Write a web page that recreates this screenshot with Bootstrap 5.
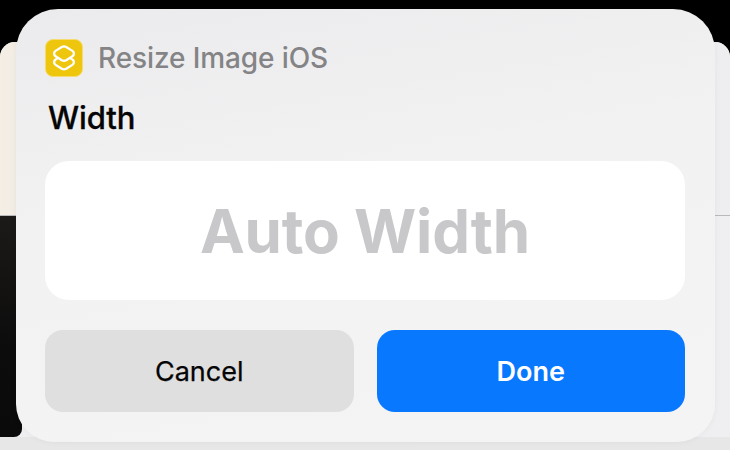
<!DOCTYPE html>
<html lang="en">
<head>
<meta charset="utf-8">
<title>Resize Image iOS</title>
<link href="https://cdn.jsdelivr.net/npm/bootstrap@5.3.0/dist/css/bootstrap.min.css" rel="stylesheet">
<style>
html,body{width:730px;height:450px;overflow:hidden;background:#000;font-family:"Inter","Liberation Sans",sans-serif}
.stage{width:730px;height:450px;padding-top:42px}
.sheet{height:408px;background:#e9e9eb;border-radius:15px 15px 0 0;overflow:hidden}
.sheet-top{height:174px;background:linear-gradient(90deg,#f4eee5 0,#f1ece5 20px,#eeeef0 700px);border-bottom:1px solid #b9b9bb}
.sheet-mid{height:221px;background:#efeff1}
.dark-strip{width:22px;height:221px;background:linear-gradient(180deg,#1c1a18,#0c0c0c 60%,#0a0a0a);border-radius:0 0 8px 0}
.sheet-foot{height:13px;background:#e7e7e8}
.dialog{position:absolute;left:16px;top:9px;width:699px;height:433px;border-radius:42px 42px 38px 38px;background:linear-gradient(170deg,#ebebed 0,#f2f2f3 40%,#f4f4f5 100%);padding:30px 30px 30px 29px;box-shadow:0 0 6px rgba(0,0,0,.05)}
.app-icon{width:38px;height:38px;border-radius:8px;background:#eec60e;border:1px solid #f6dc70}
.app-name{font-size:28px;font-weight:500;line-height:38px;color:#848486;letter-spacing:-.1px;margin-left:15px}
.field-label{font-size:31px;font-weight:500;line-height:36px;color:#050505;margin:23px 0 25px 3px;letter-spacing:-.1px;-webkit-text-stroke:.3px #050505}
.entry{height:139px;border-radius:24px;background:#fff;color:#c8c8cb;font-size:60px;font-weight:700;letter-spacing:-.1px}
.choice-row{margin-top:30px;gap:23px}
.choice{height:82px;border-radius:18px;font-size:27px;line-height:1;padding:0;border:0;flex:1 1 0}
.choice-cancel{background:#dfdfe0;color:#050505;font-weight:400;-webkit-text-stroke:.25px #050505}
.choice-done{background:#0879ff;color:#fff;font-weight:600}
.choice-cancel:hover,.choice-cancel:active{background:#dfdfe0;color:#050505}
.choice-done:hover,.choice-done:active{background:#0879ff;color:#fff}
</style>
</head>
<body>
<div class="stage position-relative">
  <div class="sheet">
    <div class="sheet-top"></div>
    <div class="sheet-mid"><div class="dark-strip"></div></div>
    <div class="sheet-foot"></div>
  </div>
  <div class="dialog">
    <div class="d-flex align-items-center">
      <div class="app-icon d-flex align-items-center justify-content-center flex-shrink-0">
        <svg width="36" height="36" viewBox="0 0 36 36" fill="none" stroke="#fff" stroke-width="2.3" stroke-linejoin="round" stroke-linecap="round" aria-hidden="true">
          <path d="M15.8 7a4.4 4.4 0 0 1 4.4 0l6.2 3.9a3.2 3.2 0 0 1 0 5.4l-6.2 3.9a4.4 4.4 0 0 1-4.4 0l-6.2-3.9a3.2 3.2 0 0 1 0-5.4z"/>
          <path d="M11 18.6l-1.4.9a3.2 3.2 0 0 0 0 5.4l6.2 3.9a4.4 4.4 0 0 0 4.4 0l6.2-3.9a3.2 3.2 0 0 0 0-5.4l-1.4-.9"/>
        </svg>
      </div>
      <div class="app-name">Resize Image iOS</div>
    </div>
    <div class="field-label">Width</div>
    <div class="entry d-flex align-items-center justify-content-center">Auto Width</div>
    <div class="choice-row d-flex">
      <button type="button" class="btn choice choice-cancel">Cancel</button>
      <button type="button" class="btn choice choice-done">Done</button>
    </div>
  </div>
</div>
<script src="https://cdn.jsdelivr.net/npm/bootstrap@5.3.0/dist/js/bootstrap.bundle.min.js"></script>
</body>
</html>
